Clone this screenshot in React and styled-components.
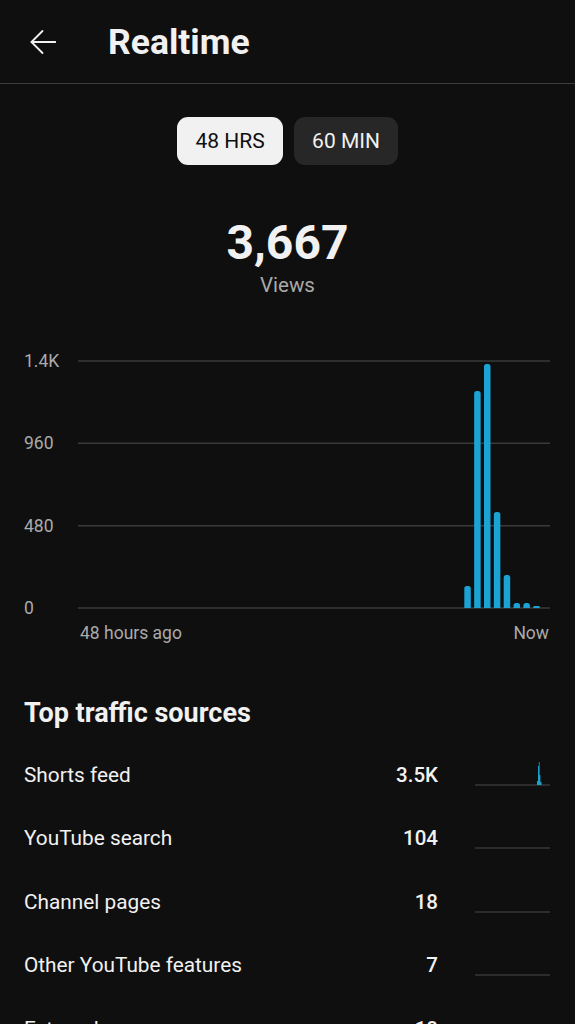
import React from "react";
import styled, { createGlobalStyle } from "styled-components";

const GlobalStyle = createGlobalStyle`
  html, body {
    margin: 0;
    padding: 0;
    background: #0f0f0f;
  }
  body {
    font-family: Roboto, "Noto Sans", Arial, sans-serif;
    color: #f1f1f1;
    width: 575px;
    height: 1024px;
    overflow: hidden;
  }
`;

const Page = styled.div`
  width: 575px;
  min-height: 1024px;
  background: #0f0f0f;
  display: flex;
  flex-direction: column;
`;

const Header = styled.header`
  height: 83px;
  display: flex;
  align-items: center;
  border-bottom: 1px solid #3d3d3d;
`;

const BackButton = styled.div`
  margin-left: 30px;
  width: 26px;
  height: 26px;
  display: flex;
`;

const Title = styled.h1`
  margin: 0 0 0 52px;
  font-size: 35.5px;
  line-height: 40px;
  font-weight: 700;
  color: #f1f1f1;
`;

const ChipRow = styled.div`
  margin-top: 33px;
  display: flex;
  justify-content: center;
  gap: 11px;
`;

const Chip = styled.div`
  height: 48px;
  width: ${(p) => p.$w}px;
  border-radius: 11px;
  display: flex;
  align-items: center;
  justify-content: center;
  font-size: 21px;
  background: ${(p) => (p.$active ? "#f1f1f1" : "#272727")};
  color: ${(p) => (p.$active ? "#0f0f0f" : "#f1f1f1")};
`;

const Total = styled.div`
  margin-top: 50px;
  display: flex;
  flex-direction: column;
  align-items: center;
`;

const TotalValue = styled.div`
  font-size: 48px;
  line-height: 56px;
  font-weight: 700;
`;

const TotalLabel = styled.div`
  margin-top: 2px;
  font-size: 20.5px;
  line-height: 24px;
  color: #aaaaaa;
`;

const Chart = styled.div`
  margin-top: 54px;
  padding: 0 25px 0 24px;
  display: grid;
  grid-template-columns: 54px 1fr;
`;

const AxisY = styled.div`
  height: 267px;
  display: flex;
  flex-direction: column;
  justify-content: space-between;
`;

const AxisLabel = styled.div`
  font-size: 17.5px;
  line-height: 20px;
  color: #aaaaaa;
`;

const Plot = styled.svg`
  display: block;
  width: 472px;
  height: 267px;
`;

const AxisX = styled.div`
  grid-column: 2;
  margin-top: 5px;
  display: flex;
  justify-content: space-between;
  padding: 0 1px 0 2px;
`;

const Section = styled.section`
  margin-top: 54px;
  padding: 0 25px 0 24px;
`;

const SectionTitle = styled.h2`
  margin: 0 0 14px;
  font-size: 27px;
  line-height: 32px;
  font-weight: 700;
`;

const SourceRow = styled.div`
  height: 63.5px;
  display: grid;
  grid-template-columns: 1fr auto 75px;
  column-gap: 37px;
  align-items: center;
`;

const SourceName = styled.div`
  font-size: 20.8px;
  line-height: 24px;
`;

const SourceValue = styled.div`
  font-size: 20.5px;
  line-height: 24px;
  font-weight: 500;
  text-align: right;
`;

const Spark = styled.svg`
  display: block;
  width: 75px;
  height: 30px;
`;

const bars = [22, 217, 244, 96, 33, 5, 5, 2];
const gridY = [10, 92.33, 174.67, 257];

const barPath = (x, h, w, base) => {
  const r = Math.min(2.5, h / 2);
  const top = base - h;
  return `M${x} ${base} V${top + r} Q${x} ${top} ${x + r} ${top} H${x + w - r} Q${x + w} ${top} ${x + w} ${top + r} V${base} Z`;
};

const BackArrow = () => (
  <svg width="26" height="26" viewBox="0 0 26 26" fill="none" stroke="#f1f1f1" strokeWidth="1.8" strokeLinecap="round" strokeLinejoin="round">
    <path d="M25.5 13H1.5" />
    <path d="M12.5 2L1.5 13L12.5 24" />
  </svg>
);

const sources = [
  { name: "Shorts feed", value: "3.5K", spike: true },
  { name: "YouTube search", value: "104" },
  { name: "Channel pages", value: "18" },
  { name: "Other YouTube features", value: "7" },
  { name: "External", value: "18" },
];

const Sparkline = ({ spike }) => (
  <Spark viewBox="0 0 75 30">
    <line x1="0" y1="25" x2="75" y2="25" stroke="#4a4a4a" strokeWidth="1.2" />
    {spike && (
      <path
        d="M62 25 V21 H63 V6 H63.8 V2 H64.6 V15 H65.4 V22 H66.5 V25 Z"
        fill="#1a9fcf"
      />
    )}
  </Spark>
);

export default function App() {
  return (
    <Page>
      <GlobalStyle />
      <Header>
        <BackButton>
          <BackArrow />
        </BackButton>
        <Title>Realtime</Title>
      </Header>

      <ChipRow>
        <Chip $active $w={106}>48 HRS</Chip>
        <Chip $w={104}>60 MIN</Chip>
      </ChipRow>

      <Total>
        <TotalValue>3,667</TotalValue>
        <TotalLabel>Views</TotalLabel>
      </Total>

      <Chart>
        <AxisY>
          <AxisLabel>1.4K</AxisLabel>
          <AxisLabel>960</AxisLabel>
          <AxisLabel>480</AxisLabel>
          <AxisLabel>0</AxisLabel>
        </AxisY>
        <Plot viewBox="0 0 472 267">
          {gridY.map((y) => (
            <line key={y} x1="0" y1={y} x2="472" y2={y} stroke="#3a3a3a" strokeWidth="1.5" />
          ))}
          {bars.map((h, i) => (
            <path key={i} d={barPath(386.3 + i * 9.85, h, 6.5, 257)} fill="#1ba3d4" />
          ))}
        </Plot>
        <AxisX>
          <AxisLabel>48 hours ago</AxisLabel>
          <AxisLabel>Now</AxisLabel>
        </AxisX>
      </Chart>

      <Section>
        <SectionTitle>Top traffic sources</SectionTitle>
        {sources.map((s) => (
          <SourceRow key={s.name}>
            <SourceName>{s.name}</SourceName>
            <SourceValue>{s.value}</SourceValue>
            <Sparkline spike={s.spike} />
          </SourceRow>
        ))}
      </Section>
    </Page>
  );
}
